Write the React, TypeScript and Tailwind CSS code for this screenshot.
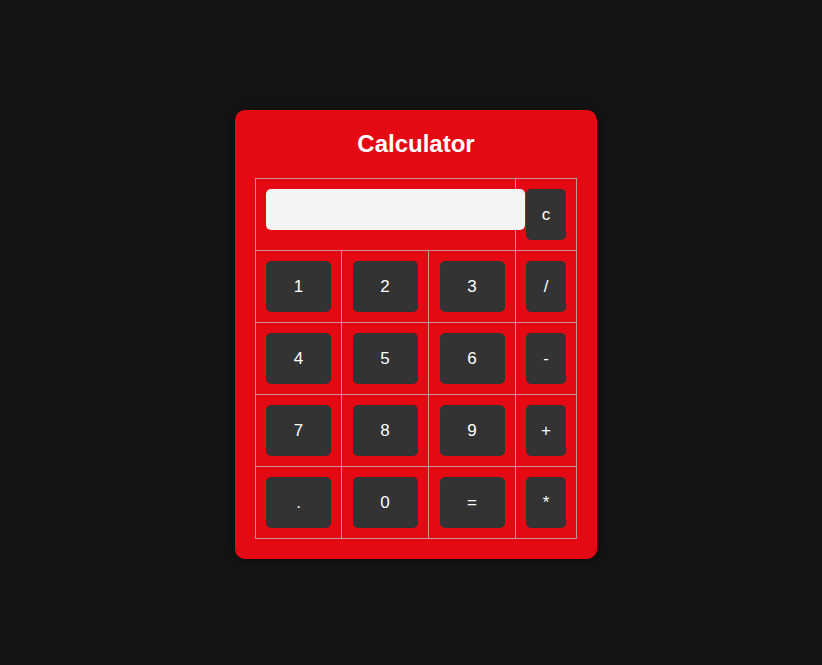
const rows: string[][] = [
  ['1', '2', '3', '/'],
  ['4', '5', '6', '-'],
  ['7', '8', '9', '+'],
  ['.', '0', '=', '*'],
];

function Key({ label, narrow }: { label: string; narrow?: boolean }) {
  return (
    <button
      className={
        'h-[51px] rounded-[5px] bg-[#333333] text-[17px] text-white ' +
        (narrow ? 'w-[40px]' : 'w-[65px]')
      }
    >
      {label}
    </button>
  );
}

export default function App() {
  return (
    <div
      className="min-h-screen bg-[#141414] pl-[235px] pt-[110px]"
      style={{ fontFamily: '"Liberation Sans", Arial, sans-serif' }}
    >
      <div className="w-[362px] rounded-[10px] bg-[#e50914] px-5 pb-5 pt-5 shadow-[0_0_12px_rgba(0,0,0,0.5)]">
        <h2 className="mb-5 text-center text-[24px] font-bold leading-[28px] text-white">Calculator</h2>

        {/* grid: 4 columns, 5 rows */}
        <div className="grid w-[322px] grid-cols-[86px_87px_87px_61px] auto-rows-[72px] border-l border-t border-[#c4969a]">
          <div className="col-span-3 border-b border-r border-[#c4969a] pl-[10px] pt-[10px]">
            <input
              type="text"
              readOnly
              className="relative z-10 h-[41px] w-[259px] rounded-[5px] bg-[#f4f4f4] outline-none"
            />
          </div>
          <div className="flex justify-center border-b border-r border-[#c4969a] pt-[10px]">
            <Key label="c" narrow />
          </div>

          {rows.map((r, i) =>
            r.map((k, j) => (
              <div
                key={i + '-' + j}
                className="flex justify-center border-b border-r border-[#c4969a] pt-[10px]"
              >
                <Key label={k} narrow={j === 3} />
              </div>
            ))
          )}
        </div>
      </div>
    </div>
  );
}
